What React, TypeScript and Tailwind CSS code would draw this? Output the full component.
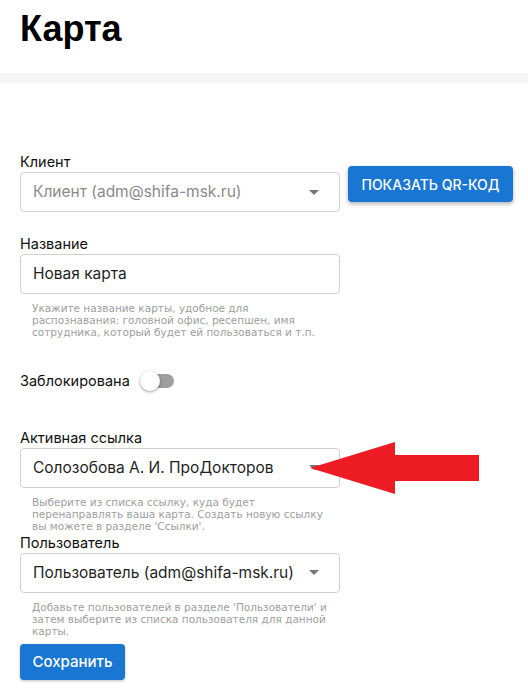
import React from "react";

const font = { fontFamily: "Inter, 'Noto Sans', sans-serif" };

const Caret = () => (
  <svg width="10" height="5" viewBox="0 0 10 5" className="shrink-0">
    <path d="M0 0h10L5 5z" fill="#757575" />
  </svg>
);

const Help = ({ children }: { children: React.ReactNode }) => (
  <p className="pl-3 pr-2 mt-[8px] w-[320px] text-[10.5px] leading-[12px] text-[#9e9e9e] font-['DejaVu_Sans',sans-serif]">
    {children}
  </p>
);

const Box = ({
  text,
  muted,
  caret,
}: {
  text: string;
  muted?: boolean;
  caret?: boolean;
}) => (
  <div className="flex items-center justify-between w-[320px] h-[40px] border border-[#d0d0d0] rounded-[4px] pl-3 pr-5 bg-white">
    <span className={`text-[15.5px] ${muted ? "text-[#8a8a8a]" : "text-[#1f1f1f]"}`}>
      {text}
    </span>
    {caret && <Caret />}
  </div>
);

const Label = ({ children }: { children: React.ReactNode }) => (
  <div className="text-[14.5px] leading-[18px] text-[#111] mb-[1px]">{children}</div>
);

export default function App() {
  return (
    <div className="w-[528px] h-[693px] bg-white overflow-hidden" style={font}>
      <div className="h-[73px] pl-[20px] pt-[8px]">
        <h1 className="text-[36px] leading-[42px] font-bold text-black font-['Liberation_Sans',Arial,sans-serif]">
          Карта
        </h1>
      </div>
      <div className="h-[10px] bg-[#f5f5f5]" />

      <div className="pl-[20px] pt-[70px]">
        <div className="flex items-start gap-[8px]">
          <div>
            <Label>Клиент</Label>
            <Box text="Клиент (adm@shifa-msk.ru)" muted caret />
          </div>
          <button className="mt-[13px] h-[36px] w-[165px] rounded-[4px] bg-[#1976d2] text-white text-[14px] font-medium shadow-[0_2px_4px_rgba(0,0,0,0.3)]">
            ПОКАЗАТЬ QR-КОД
          </button>
        </div>

        <div className="mt-[23px]">
          <Label>Название</Label>
          <Box text="Новая карта" />
          <Help>
            Укажите название карты, удобное для распознавания: головной офис,
            ресепшен, имя сотрудника, который будет ей пользоваться и т.п.
          </Help>
        </div>

        <div className="mt-[32px] flex items-center gap-[10px]">
          <span className="text-[14.5px] text-[#111]">Заблокирована</span>
          <div className="relative w-[34px] h-[20px]">
            <div className="absolute left-[4px] right-0 top-[3px] h-[14px] rounded-full bg-[#9e9e9e]" />
            <div className="absolute left-0 top-0 w-[20px] h-[20px] rounded-full bg-white shadow-[0_1px_3px_rgba(0,0,0,0.4)]" />
          </div>
        </div>

        <div className="mt-[37px] relative">
          <Label>Активная ссылка</Label>
          <Box text="Солозобова А. И. ПроДокторов" caret />
          <Help>
            Выберите из списка ссылку, куда будет перенаправлять ваша карта.
            Создать новую ссылку вы можете в разделе 'Ссылки'.
          </Help>
          <svg
            className="absolute left-[290px] top-[13px]"
            width="170"
            height="54"
            viewBox="0 0 170 54"
          >
            <path d="M0 26L85 0V13H169V39H85V52z" fill="#ed1c24" />
          </svg>
        </div>

        <div className="mt-[2px]">
          <Label>Пользователь</Label>
          <Box text="Пользователь (adm@shifa-msk.ru)" caret />
          <Help>
            Добавьте пользователей в разделе 'Пользователи' и затем выберите из
            списка пользователя для данной карты.
          </Help>
        </div>

        <button className="mt-[7px] h-[36px] w-[105px] rounded-[4px] bg-[#1976d2] text-white text-[15px] font-medium shadow-[0_1px_3px_rgba(0,0,0,0.25)]">
          Сохранить
        </button>
      </div>
    </div>
  );
}
